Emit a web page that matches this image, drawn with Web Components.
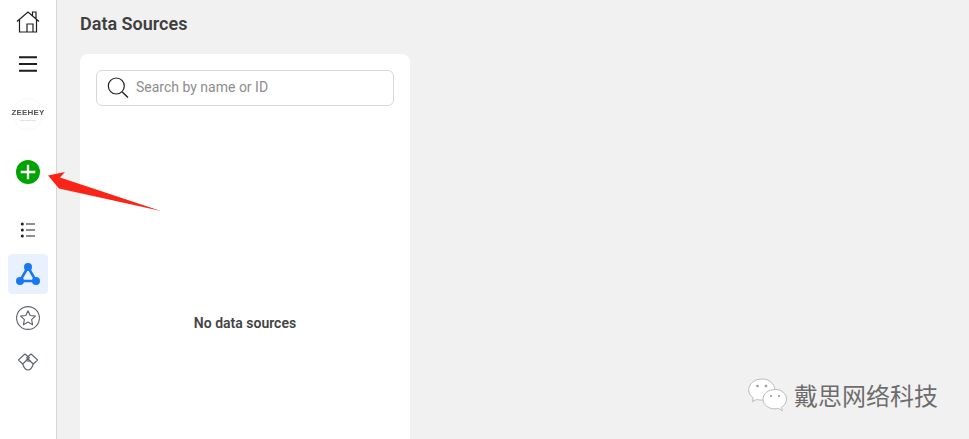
<!DOCTYPE html>
<html>
<head>
<meta charset="utf-8">
<style>
  html, body { margin: 0; height: 100%; overflow: hidden; }
  body { font-family: Roboto, sans-serif; background: #f1f1f1; }
</style>
</head>
<body>
<app-shell>
  <side-nav slot="nav"></side-nav>
  <page-title>Data Sources</page-title>
  <source-panel placeholder="Search by name or ID">No data sources</source-panel>
</app-shell>
<red-arrow></red-arrow>
<wechat-mark>戴思网络科技</wechat-mark>

<script>
class AppShell extends HTMLElement {
    constructor() {
        super();
        this.attachShadow({ mode: 'open' }).innerHTML = `<style>
            :host { display: flex; height: 439px; }
            main { flex: 1; padding: 0 0 0 23px; display: flex; flex-direction: column; min-width: 0; }
        </style><slot name="nav"></slot><main><slot></slot></main>`;
    }
}

class SideNav extends HTMLElement {
    constructor() {
        super();
        this.attachShadow({ mode: 'open' }).innerHTML = `<style>
            :host { display: flex; flex-direction: column; align-items: center; width: 56px; height: 439px; background: #fff; border-right: 1px solid #d6d6d6; flex: none; }
            .slot { width: 40px; display: flex; align-items: center; justify-content: center; border-radius: 4px; }
            .active { background: #e9f1fe; }
            svg { display: block; }
        </style>
        <div class="slot" style="height:44px">
            <svg width="24" height="24" viewBox="0 0 24 24" fill="none" stroke="#1c1e21" stroke-width="1.2">
                <path d="M1 11.500 12 2l11 9.500M3.500 9.500V22h17V9.500M11 22v-8h6v8M16.500 5.500V2H20v7"/>
            </svg>
        </div>
        <div class="slot" style="height:40px">
            <svg width="18" height="16" viewBox="0 0 18 16" fill="none"><path d="M0 1.200h18M0 8h18M0 14.800h18" stroke="#1c1e21" stroke-width="1.900"/></svg>
        </div>
        <div class="slot" style="height:60px">
            <zeehey-logo></zeehey-logo>
        </div>
        <div class="slot" style="height:56px">
            <svg width="24" height="24" viewBox="0 0 24 24"><circle cx="12" cy="12" r="12" fill="#00a400"/><path d="M12 4.700v14.600M4.700 12h14.600" stroke="#fff" stroke-width="2.300" fill="none"/></svg>
        </div>
        <div class="slot" style="height:48px;margin-top:6px">
            <svg width="16" height="16" viewBox="0 0 16 16" fill="#1c1e21"><circle cx="2.300" cy="2" r="1.500"/><circle cx="2.300" cy="8" r="1.500"/><circle cx="2.300" cy="14" r="1.500"/><path d="M6 1.400h9v1.200H6zM6 7.400h9v1.200H6zM6 13.400h9v1.200H6z"/></svg>
        </div>
        <div class="slot active" style="height:40px">
            <svg width="24" height="24" viewBox="0 0 24 24" fill="none"><path d="M12 5 4 19h16z" stroke="#1877f2" stroke-width="2.600"/><circle cx="12" cy="5" r="4" fill="#1877f2"/><circle cx="4" cy="19" r="4" fill="#1877f2"/><circle cx="20" cy="19" r="4" fill="#1877f2"/></svg>
        </div>
        <div class="slot" style="height:48px">
            <svg width="24" height="24" viewBox="0 0 24 24" fill="none" stroke="#5f6368" stroke-width="1.100"><circle cx="12" cy="12" r="11.400"/><path d="m12 4.800 2.200 4.700 5.200.6-3.800 3.500 1 5.100L12 16l-4.600 2.700 1-5.100-3.800-3.500 5.200-.6z" stroke-linejoin="round"/></svg>
        </div>
        <div class="slot" style="height:40px">
            <svg width="20" height="18" viewBox="0 0 20 18" fill="none" stroke="#606770" stroke-width="1.200" stroke-linejoin="round"><path d="M.3 7 7 1l4.300 3.700L4.700 11z"/><path d="M19.700 7 13 1 8.700 4.700 15.300 11z"/><path d="M4.700 11c1.300 4 3.300 6 5.300 6s4-2 5.300-6"/><path d="M8 6.500c1.500 2.500 3.500 1.500 4.500.8"/></svg>
        </div>`;
    }
}

class ZeeheyLogo extends HTMLElement {
    constructor() {
        super();
        this.attachShadow({ mode: 'open' }).innerHTML = `<style>
            :host { display: flex; flex-direction: column; align-items: center; justify-content: center; width: 32px; height: 32px; border-radius: 50%; border: 1px solid #f8f8f8; box-sizing: border-box; color: #555; padding-top: 2px; }
            b { font: 700 8px/10px "Liberation Sans", sans-serif; letter-spacing: .2px; filter: blur(.3px); }
            i { font: 400 2px/4px "Liberation Sans", sans-serif; color: #aaa; }
        </style><b>ZEEHEY</b><i>easy way to more</i>`;
    }
}

class PageTitle extends HTMLElement {
    constructor() {
        super();
        this.attachShadow({ mode: 'open' }).innerHTML = `<style>
            :host { display: block; height: 54px; box-sizing: border-box; padding-top: 14px; font: 600 18px/20px Roboto, sans-serif; color: #3e3e3e; }
        </style><slot></slot>`;
    }
}

class SourcePanel extends HTMLElement {
    constructor() {
        super();
        const placeholder = this.getAttribute('placeholder');
        this.attachShadow({ mode: 'open' }).innerHTML = `<style>
            :host { display: flex; flex-direction: column; width: 330px; flex: 1; box-sizing: border-box; padding: 16px; background: #fff; border-radius: 8px 8px 0 0; }
            .search { display: flex; align-items: center; gap: 6px; height: 36px; box-sizing: border-box; border: 1px solid #d8d8d8; border-radius: 6px; padding: 0 10px; font: 400 14px/20px Roboto, sans-serif; color: #8d8d8d; }
            .search span { margin-top: -2px; }
            svg { flex: none; display: block; }
            .empty { padding-top: 208px; text-align: center; font: 600 14px/18px Roboto, sans-serif; color: #444; }
        </style>
        <div class="search">
            <svg width="23" height="24" viewBox="0 0 23 24" fill="none" stroke="#1c1e21"><circle cx="9.300" cy="10" r="8" stroke-width="1.200"/><path d="m15.300 16 5.700 5.400" stroke-width="1.400"/></svg>
            <span>${placeholder}</span>
        </div>
        <div class="empty"><slot></slot></div>`;
    }
}

class RedArrow extends HTMLElement {
    constructor() {
        super();
        this.attachShadow({ mode: 'open' }).innerHTML = `<style>
            :host { position: absolute; left: 0; top: 0; width: 170px; height: 220px; pointer-events: none; }
            svg { display: block; }
        </style><svg width="170" height="220" viewBox="0 0 170 220"><path d="M48 175.500 65 172 60 177.500 161 211 59 188.500z" fill="#fb2418"/></svg>`;
    }
}

class WechatMark extends HTMLElement {
    constructor() {
        super();
        this.attachShadow({ mode: 'open' }).innerHTML = `<style>
            :host { position: absolute; left: 748px; top: 377px; display: flex; align-items: center; gap: 7px; font: 400 24px/36px "Noto Sans CJK SC", sans-serif; color: #6c6c6c; text-shadow: 0 0 1px #fff; }
            svg { display: block; }
        </style><svg width="39" height="35" viewBox="0 0 39 35">
            <path d="M14 1C6.500 1 .7 5.800.7 12c0 3.300 1.800 6 4.600 8l-1 3.700 4.300-2.200c1.600.4 3.200.6 5.100.6 7 0 13-4.900 13-10.500S21.500 1 14 1z" fill="#fff" stroke="#bbb"/>
            <path d="M27 11.500c-6.500 0-12 4.200-12 9.700s5.500 9.700 12 9.700c1.300 0 2.600-.2 3.700-.5l3.600 2.500-.8-3.700c3-1.800 5-4.600 5-8 0-5.500-5-9.700-10.800-9.700z" fill="#fff" stroke="#bbb"/>
            <circle cx="9.500" cy="8" r="1.300" fill="#999"/><circle cx="18" cy="8" r="1.300" fill="#999"/><circle cx="23" cy="18" r="1.100" fill="#999"/><circle cx="31" cy="18" r="1.100" fill="#999"/>
        </svg><slot></slot>`;
    }
}

customElements.define('zeehey-logo', ZeeheyLogo);
customElements.define('side-nav', SideNav);
customElements.define('app-shell', AppShell);
customElements.define('page-title', PageTitle);
customElements.define('source-panel', SourcePanel);
customElements.define('red-arrow', RedArrow);
customElements.define('wechat-mark', WechatMark);
</script>
</body>
</html>
